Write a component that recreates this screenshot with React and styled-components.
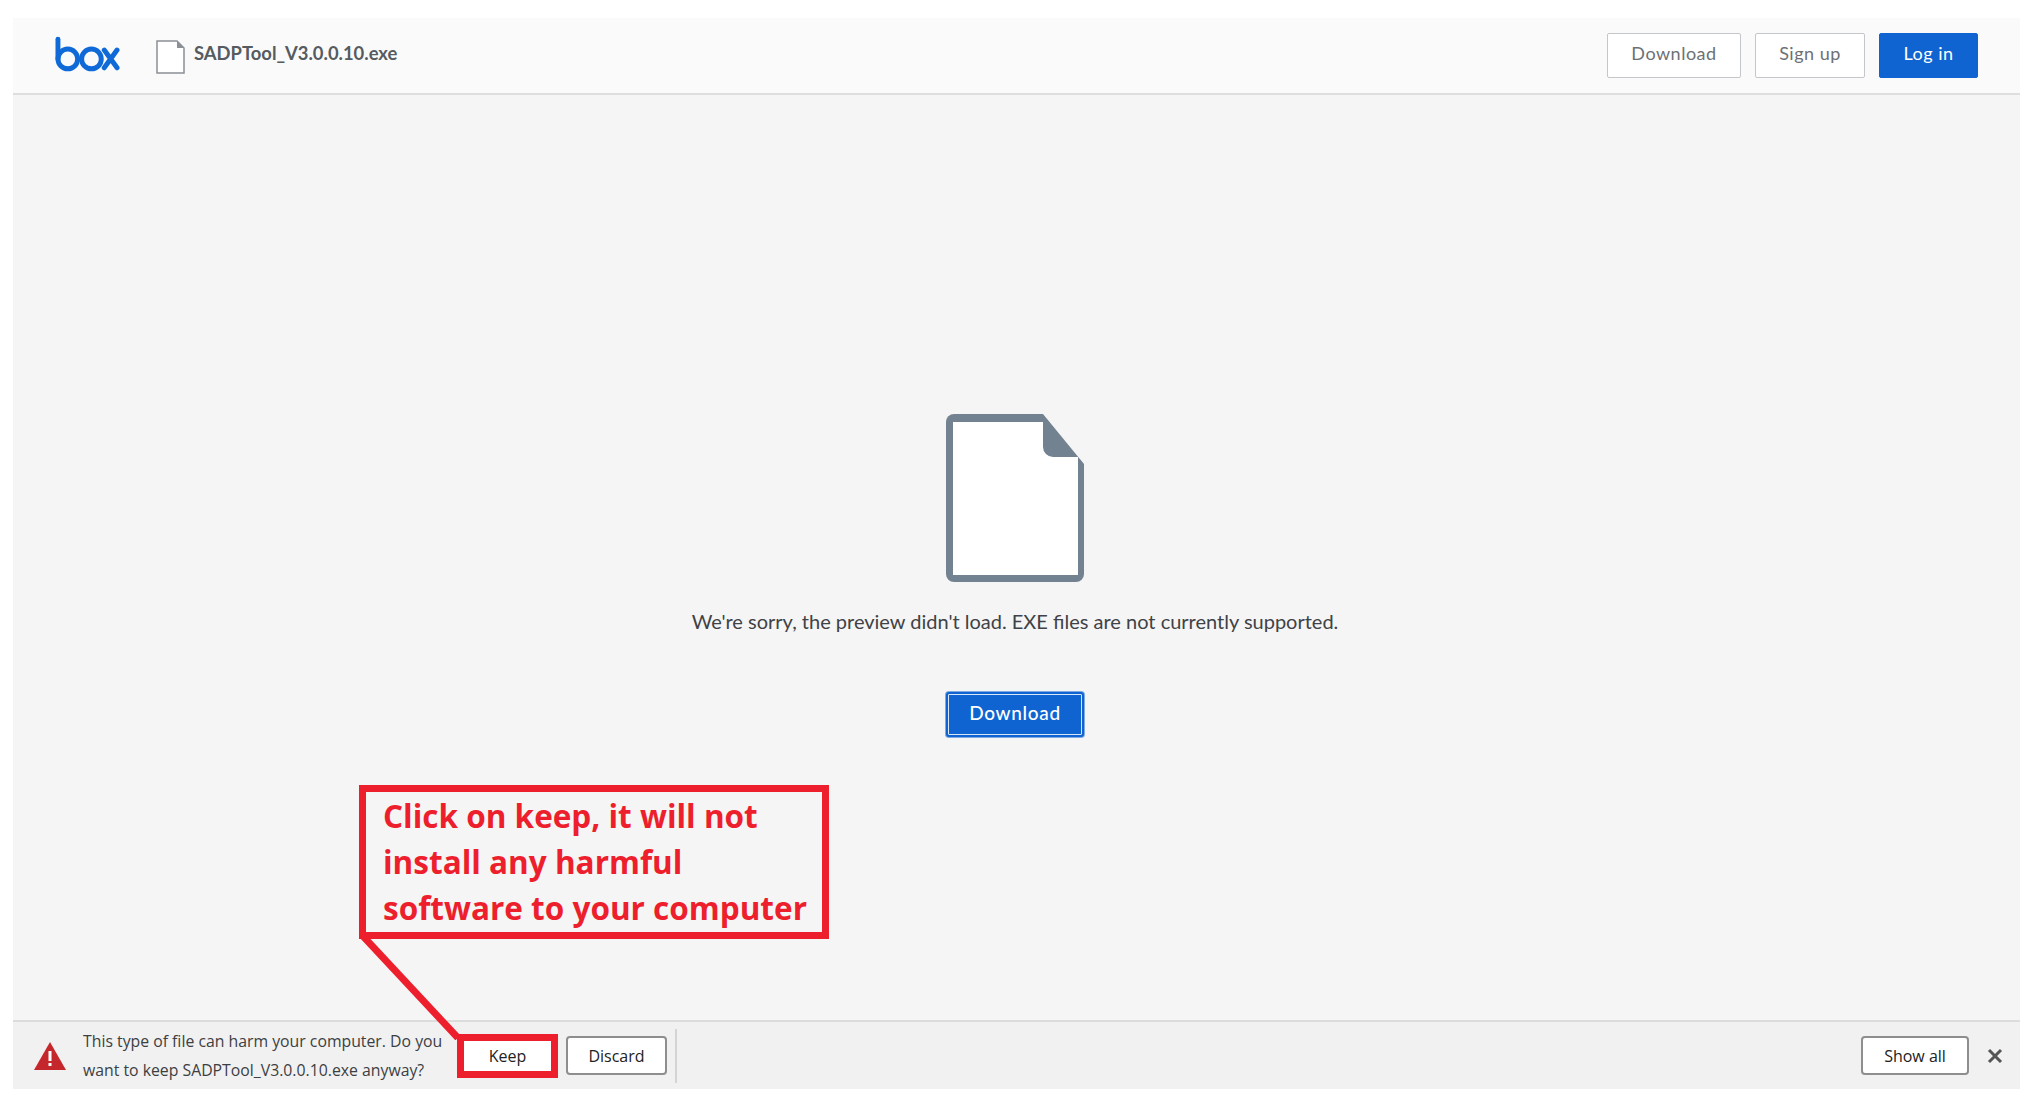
import React from "react";
import styled, { createGlobalStyle } from "styled-components";

const GlobalStyle = createGlobalStyle`
  html, body {
    margin: 0;
    padding: 0;
    background: #fff;
  }
  * {
    box-sizing: border-box;
  }
`;

const Frame = styled.div`
  position: relative;
  width: 2034px;
  height: 1108px;
  padding: 18px 14px 19px 13px;
  display: flex;
  flex-direction: column;
  font-family: Lato, sans-serif;
`;

const Header = styled.header`
  height: 77px;
  flex: none;
  display: flex;
  align-items: center;
  padding: 0 42px 0 42px;
  background: #fafafa;
  border-bottom: 2px solid #dedede;
`;

const Logo = styled.svg`
  width: 65px;
  height: 36px;
  flex: none;
  margin-top: -4px;
`;

const DocIcon = styled.svg`
  width: 29px;
  height: 34px;
  flex: none;
  margin-left: 36px;
  margin-top: 2px;
`;

const FileName = styled.span`
  margin-left: 9px;
  margin-top: -6px;
  font-size: 18.4px;
  font-weight: 700;
  color: #555b60;
`;

const HeaderActions = styled.div`
  margin-left: auto;
  display: flex;
  gap: 14px;
`;

const HeaderButton = styled.button`
  width: ${(p) => p.$width}px;
  height: 45px;
  border-radius: 2px;
  font-family: Lato, sans-serif;
  font-size: 18px;
  letter-spacing: 0.5px;
  padding: 0 0 6px;
  color: ${(p) => (p.$primary ? "#fff" : "#6d7175")};
  background: ${(p) => (p.$primary ? "#0f64d2" : "#fff")};
  border: 1px solid ${(p) => (p.$primary ? "#0f64d2" : "#c3c7cb")};
`;

const Main = styled.main`
  flex: 1;
  display: flex;
  flex-direction: column;
  align-items: center;
  padding: 319px 3px 0 0;
  background: #f5f5f5;
`;

const BigDoc = styled.svg`
  width: 138px;
  height: 168px;
  flex: none;
`;

const Message = styled.p`
  margin: 27px 0 0;
  font-size: 20px;
  line-height: 24px;
  color: #3f4246;
`;

const DownloadButton = styled.button`
  margin-top: 59px;
  width: 138px;
  height: 45px;
  padding: 0 0 4px;
  border: 2px solid #0f64d2;
  outline: none;
  border-radius: 3px;
  background: #0f64d2;
  box-shadow: inset 0 0 0 1px #d7e6f8, 0 0 0 1px #7fa9e2;
  color: #fff;
  font-family: Lato, sans-serif;
  font-size: 19px;
  font-weight: 500;
  letter-spacing: 0.7px;
`;

const DownloadBar = styled.footer`
  height: 69px;
  flex: none;
  display: flex;
  align-items: center;
  padding: 0 17px 0 21px;
  background: #f1f1f1;
  border-top: 2px solid #dcdcdc;
  font-family: "Open Sans", sans-serif;
`;

const WarnIcon = styled.svg`
  width: 32px;
  height: 28px;
  flex: none;
`;

const Warning = styled.p`
  margin: 0 0 0 17px;
  width: 374px;
  flex: none;
  font-size: 15.8px;
  line-height: 28.5px;
  color: #3c4043;
`;

const BarButton = styled.button`
  width: ${(p) => p.$width}px;
  height: ${(p) => p.$height || 39}px;
  flex: none;
  padding: 0;
  background: #fff;
  border: 2px solid #8e8e8e;
  border-radius: 4px;
  color: #222;
  font-family: "Open Sans", sans-serif;
  font-size: 16px;
`;

const KeepButton = styled(BarButton)`
  border: 7px solid #ed1f2d;
  border-radius: 0;
  margin-right: 8px;
`;

const Divider = styled.span`
  width: 2px;
  height: 54px;
  flex: none;
  margin-left: 8px;
  background: #d4d4d4;
`;

const ShowAll = styled(BarButton)`
  margin-left: auto;
`;

const CloseIcon = styled.svg`
  width: 16px;
  height: 16px;
  flex: none;
  margin-left: 18px;
`;

const Callout = styled.div`
  position: absolute;
  left: 359px;
  top: 785px;
  width: 470px;
  height: 154px;
  padding: 1px 0 0 17px;
  border: 7px solid #ed1f2d;
  color: #ed1f2d;
  font-family: "Open Sans", sans-serif;
  font-size: 31.5px;
  font-weight: 700;
  line-height: 46px;
  white-space: nowrap;
`;

const Pointer = styled.svg`
  position: absolute;
  left: 355px;
  top: 935px;
  width: 110px;
  height: 105px;
`;

export default function App() {
  return (
    <>
      <GlobalStyle />
      <Frame>
        <Header>
          <Logo viewBox="0 0 66 36">
            <g fill="none" stroke="#0f6ad8" strokeWidth="5" strokeLinecap="round">
              <path d="M3 3V23" />
              <circle cx="13" cy="23" r="10" />
              <circle cx="37" cy="23" r="10" />
              <path d="M50 14L63 32M63 14L50 32" />
            </g>
          </Logo>
          <DocIcon viewBox="0 0 29 34">
            <path d="M1 1H21L28 8V33H1Z" fill="#fff" stroke="#8a9096" strokeWidth="1.5" />
            <path d="M21 1L28 8H21Z" fill="#8a9096" />
          </DocIcon>
          <FileName>SADPTool_V3.0.0.10.exe</FileName>
          <HeaderActions>
            <HeaderButton $width={134}>Download</HeaderButton>
            <HeaderButton $width={110}>Sign up</HeaderButton>
            <HeaderButton $width={99} $primary>Log in</HeaderButton>
          </HeaderActions>
        </Header>
        <Main>
          <BigDoc viewBox="0 0 138 168">
            <path d="M8 0H97L138 50V160a8 8 0 0 1-8 8H8a8 8 0 0 1-8-8V8a8 8 0 0 1 8-8Z" fill="#738290" />
            <path d="M7 8H97V33a10 10 0 0 0 10 10H132V161H7Z" fill="#fff" />
          </BigDoc>
          <Message>We're sorry, the preview didn't load. EXE files are not currently supported.</Message>
          <DownloadButton>Download</DownloadButton>
        </Main>
        <DownloadBar>
          <WarnIcon viewBox="0 0 32 28">
            <path d="M16 0L32 28H0Z" fill="#c5282c" />
            <path d="M14.5 9h3v10h-3zM14.5 21h3v3h-3z" fill="#fff" />
          </WarnIcon>
          <Warning>
            This type of file can harm your computer. Do you want to keep SADPTool_V3.0.0.10.exe anyway?
          </Warning>
          <KeepButton $width={101} $height={44}>Keep</KeepButton>
          <BarButton $width={101}>Discard</BarButton>
          <Divider />
          <ShowAll $width={108}>Show all</ShowAll>
          <CloseIcon viewBox="0 0 16 16">
            <path d="M2 2L14 14M14 2L2 14" stroke="#555" strokeWidth="3" />
          </CloseIcon>
        </DownloadBar>
        <Pointer viewBox="0 0 110 105">
          <path d="M7 0L103 103" fill="none" stroke="#ed1f2d" strokeWidth="7" />
        </Pointer>
        <Callout>
          Click on keep, it will not
          <br />
          install any harmful
          <br />
          software to your computer
        </Callout>
      </Frame>
    </>
  );
}
